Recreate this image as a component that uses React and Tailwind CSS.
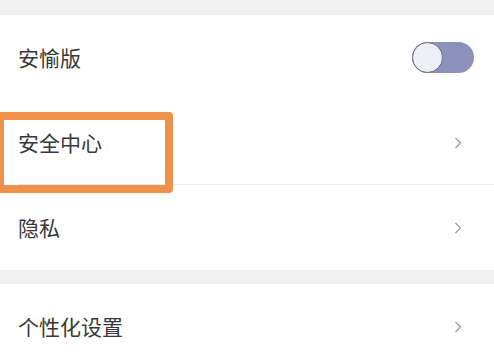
import React from 'react';

const Chevron = () => (
  <svg width="8" height="12" viewBox="0 0 8 12" className="text-[#9a9a9a]">
    <path d="M1.5 1 L6.5 6 L1.5 11" fill="none" stroke="currentColor" strokeWidth="1.2" />
  </svg>
);

const Row = ({ label, right, divider, highlight }) => (
  <div className="relative flex h-[85px] items-center justify-between bg-white pl-[18px] pr-[32px]">
    <span className="text-[21px] text-[#383838]">{label}</span>
    {right}
    {divider && <div className="absolute bottom-0 left-[18px] right-0 h-px bg-[#ececec]" />}
    {highlight && (
      <div className="absolute left-[-4px] top-[12px] z-10 h-[81px] w-[177px] rounded-[4px] border-[8px] border-[#ef9149]" />
    )}
  </div>
);

export default function App() {
  return (
    <div
      className="h-[359px] w-[494px] overflow-hidden bg-[#f0f0f0]"
      style={{ fontFamily: '"Noto Sans CJK SC", "Noto Sans", sans-serif' }}
    >
      <div className="h-[15px]" />
      <Row
        label="安愉版"
        right={
          <div className="relative mr-[-12px] h-[31px] w-[62px] rounded-full bg-[#8c91bc]">
            <div className="absolute left-0 top-0 h-[31px] w-[31px] rounded-full border border-[#6f6f78] bg-[#eeeef5]" />
          </div>
        }
      />
      <Row label="安全中心" right={<Chevron />} divider highlight />
      <Row label="隐私" right={<Chevron />} />
      <div className="h-[14px]" />
      <Row label="个性化设置" right={<Chevron />} />
    </div>
  );
}
